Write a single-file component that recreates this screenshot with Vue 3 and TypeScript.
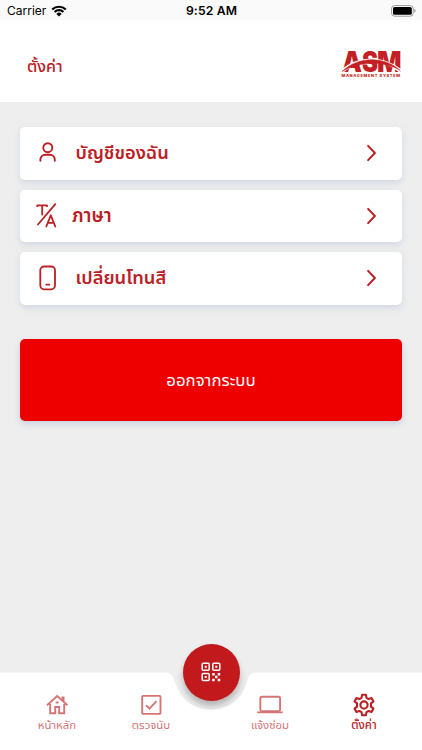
<script setup lang="ts">
interface Row { id: string; label: string }
interface Tab { id: string; label: string; active?: boolean }

const rows: Row[] = [
  { id: 'account', label: 'บัญชีของฉัน' },
  { id: 'language', label: 'ภาษา' },
  { id: 'theme', label: 'เปลี่ยนโทนสี' },
]
const leftTabs: Tab[] = [
  { id: 'home', label: 'หน้าหลัก' },
  { id: 'check', label: 'ตรวจนับ' },
]
const rightTabs: Tab[] = [
  { id: 'repair', label: 'แจ้งซ่อม' },
  { id: 'settings', label: 'ตั้งค่า', active: true },
]
</script>

<template>
  <div class="screen">
    <div class="status">
      <div class="carrier">
        <span>Carrier</span>
        <svg width="16" height="12" viewBox="0 0 16 12">
          <path d="M1.2 4.5a9.8 9.8 0 0 1 13.6 0M3.6 7a6.3 6.3 0 0 1 8.8 0" fill="none" stroke="#000" stroke-width="2.2" />
          <path d="M8 11.5L5.4 8.9a3.7 3.7 0 0 1 5.2 0z" />
        </svg>
      </div>
      <div class="clock">9:52 AM</div>
      <div class="battery">
        <svg width="26" height="12" viewBox="0 0 26 12">
          <rect x="1.6" y=".6" width="21.6" height="10.6" rx="3" fill="#fff" stroke="#999" stroke-width="1" />
          <rect x="3" y="2" width="18.8" height="7.8" rx="1.6" />
          <path d="M24.4 4c1.5.5 1.5 3.3 0 3.8z" fill="#888" />
        </svg>
      </div>
    </div>

    <header class="header">
      <h1 class="title">ตั้งค่า</h1>
      <svg class="logo" width="62" height="40" viewBox="0 -8 62 40">
        <g class="logo-main">
          <text x="2" y="20.600" textLength="20" lengthAdjust="spacingAndGlyphs">A</text>
          <text x="22" y="20.600" textLength="16" lengthAdjust="spacingAndGlyphs">S</text>
          <text x="37" y="20.600" textLength="24.500" lengthAdjust="spacingAndGlyphs">M</text>
        </g>
        <path d="M1.500 20.600C17 6.500 42 4.500 60.500 20" fill="none" stroke="#fff" stroke-width="3.600" />
        <path d="M2 20.600C16 6.500 42 3.500 60 19.200C42 9 19 10.500 2 20.600z" fill="#c41f24" stroke="#c41f24" stroke-width=".5" />
        <text class="logo-sub" x="1.500" y="25.800" textLength="58.500">MANAGEMENT SYSTEM</text>
      </svg>
    </header>

    <main class="content">
      <div v-for="row in rows" :key="row.id" class="card" :class="row.id">
        <svg v-if="row.id === 'account'" class="row-icon" width="24" height="28" viewBox="0 0 24 28">
          <g fill="none" stroke="#bb2025" stroke-width="1.9" stroke-linecap="round">
            <circle cx="11.800" cy="8.700" r="4.500" />
            <path d="M4.400 21.800v-1.300a4.900 4.900 0 0 1 4.900-4.800h4.600a4.900 4.900 0 0 1 4.900 4.800v1.300" />
          </g>
        </svg>
        <svg v-else-if="row.id === 'language'" class="row-icon" width="24" height="28" viewBox="0 0 24 28">
          <path d="M1.300 4.200V3.300H11V4.200M6.200 3.300v9.200M19.300 2.200L2 22.500M10.300 24.500L14.800 13.300L19.300 24.500M11.800 20.800h6" fill="none" stroke="#bb2025" stroke-width="1.800" stroke-linecap="round" stroke-linejoin="round" />
        </svg>
        <svg v-else class="row-icon" width="24" height="28" viewBox="0 0 24 28">
          <g fill="none" stroke="#bb2025" stroke-width="1.800" stroke-linecap="round">
            <rect x="4.300" y="2.500" width="14.700" height="22.800" rx="3.700" />
            <path d="M10.300 20.600h3" />
          </g>
        </svg>
        <span class="row-label">{{ row.label }}</span>
        <svg class="chevron" width="12" height="18" viewBox="0 0 12 18">
          <path d="M2.100 1.900L8.900 9L2.100 16.100" fill="none" stroke="#bb2025" stroke-width="2" stroke-linecap="round" stroke-linejoin="round" />
        </svg>
      </div>
      <button class="logout"><span>ออกจากระบบ</span></button>
    </main>

    <nav class="nav">
      <svg class="nav-bg" width="422" height="78" viewBox="0 0 422 78">
        <defs>
          <linearGradient id="notch" x1="0" y1="0" x2="0" y2="1">
            <stop offset="0" stop-color="#eee" />
            <stop offset=".45" stop-color="#ececec" />
            <stop offset="1" stop-color="#eee" />
          </linearGradient>
        </defs>
        <rect x="165" width="92" height="42" fill="url(#notch)" />
        <path d="M0 .500H165C172 .500 173.500 5 175 10C180 27 193 37.500 211 37.500S242 27 247 10C248.500 5 250 .500 257 .500H422V78H0Z" fill="#fff" />
      </svg>
      <div v-for="tab in leftTabs" :key="tab.id" class="tab" :class="tab.id">
        <svg v-if="tab.id === 'home'" width="24" height="22" viewBox="0 0 24 22">
          <g fill="none" stroke="#d57577" stroke-width="1.900">
            <path d="M2 11.200L12.200 2.100L22.400 11.200M5.200 10v9.200H10.200V13h4v6.200h5V10" />
            <path d="M18 7V2.500" stroke-width="3" />
            <path d="M10.700 8.500h2.800" stroke-width="2" />
          </g>
        </svg>
        <svg v-else width="24" height="22" viewBox="0 0 24 22">
          <rect x="3.200" y="1.900" width="18.300" height="18" rx="1" fill="none" stroke="#d57577" stroke-width="1.900" />
          <path d="M7 11.200l3.500 3.500l7-7.500" fill="none" stroke="#d57577" stroke-width="1.900" />
        </svg>
        <span>{{ tab.label }}</span>
      </div>
      <button class="scan" aria-label="QR">
        <svg width="20" height="20" viewBox="0 0 20 20">
          <g fill="none" stroke="#fff" stroke-width="1.500">
            <rect x="1.200" y="1.200" width="7" height="7" rx="1" />
            <rect x="11.800" y="1.200" width="7" height="7" rx="1" />
            <rect x="1.200" y="11.600" width="7" height="7" rx="1" />
          </g>
          <path fill="#fff" d="M3.700 3.700h2v2h-2zM14.300 3.700h2v2h-2zM3.700 14.100h2v2h-2zM11.200 11h2.500v2.500h-2.500zM16.700 11h2.500v2.500h-2.500zM14 13.800h2.500v2.500H14zM11.200 16.700h2.500v2.500h-2.500zM16.700 16.700h2.500v2.500h-2.500z" />
        </svg>
      </button>
      <div v-for="tab in rightTabs" :key="tab.id" class="tab" :class="[tab.id, { active: tab.active }]">
        <svg v-if="tab.id === 'repair'" width="28" height="22" viewBox="0 0 28 22">
          <rect x="4.300" y="2.800" width="19.800" height="14.400" rx="1.500" fill="none" stroke="#d57577" stroke-width="1.900" />
          <path d="M1 17.400h26v.6a1.300 1.300 0 0 1-1.300 1.300H2.300A1.300 1.300 0 0 1 1 18z" fill="#d57577" />
        </svg>
        <svg v-else width="24" height="24" viewBox="0 0 24 24">
          <g fill="none" stroke="#bb2025" stroke-width="2.100" stroke-linejoin="round">
            <circle cx="12" cy="12" r="3.600" />
            <path d="M10.100 1.800h3.800l.6 3.100l2 1.150l3-1l1.900 3.300l-2.400 2v3.300l2.400 2l-1.900 3.300l-3-1l-2 1.150l-.6 3.100h-3.800l-.6-3.100l-2-1.150l-3 1l-1.900-3.300l2.400-2v-3.300l-2.400-2l1.900-3.300l3 1l2-1.150z" />
          </g>
        </svg>
        <span>{{ tab.label }}</span>
      </div>
    </nav>
  </div>
</template>

<style>
body { margin: 0; }
</style>

<style scoped>
.screen {
  width: 422px;
  height: 750px;
  display: flex;
  flex-direction: column;
  background: #eee;
  overflow: hidden;
  color: #bb2025;
  font-family: "Noto Sans Thai", "Noto Sans", "Inter", sans-serif;
}
.status {
  height: 20px;
  display: grid;
  grid-template-columns: 1fr 1fr 1fr;
  align-items: center;
  padding: 1px 6px 0 7px;
  box-sizing: border-box;
  background: #fafafa;
  color: #000;
  font: 13px/20px "Inter", sans-serif;
}
.carrier { display: flex; align-items: center; gap: 4.500px; font-size: 12px; }
.carrier svg { margin-bottom: 1px; }
.clock { text-align: center; font-weight: 600; font-size: 12.200px; letter-spacing: .15px; }
.battery { display: flex; justify-content: flex-end; margin-bottom: 1px; }
.header {
  height: 82px;
  padding: 0 20px 0 27px;
  display: flex;
  align-items: center;
  justify-content: space-between;
  background: #fff;
}
.title { margin: 12px 0 0; font-size: 16px; font-weight: 500; line-height: 24px; }
.logo { margin-top: 4px; }
.logo-main { font: 900 28px "Inter", sans-serif; fill: #c41f24; }
.logo-sub { font: 800 4px "Inter", sans-serif; fill: #c41f24; }
.content { flex: 1; padding: 25px 20px 0; }
.card {
  height: 52.500px;
  margin-bottom: 10px;
  padding: 0 24px 0 16px;
  box-sizing: border-box;
  display: flex;
  align-items: center;
  background: #fff;
  border-radius: 5px;
  box-shadow: 0 3px 6px rgba(150, 165, 200, .3);
}
.row-label { flex: 1; margin: 1px 0 0 15.500px; font-size: 18.300px; font-weight: 600; line-height: 30px; white-space: nowrap; }
.language .row-label { margin-left: 12px; font-size: 18.600px; }
.logout {
  display: flex;
  align-items: center;
  justify-content: center;
  width: 382px;
  height: 82px;
  margin-top: 34.500px;
  padding: 2px 0 0;
  border: 0;
  border-radius: 5px;
  background: #ee0000;
  color: #fff;
  font: 400 16.800px/24px "Noto Sans Thai", "Noto Sans", sans-serif;
  box-shadow: 0 3px 6px rgba(150, 165, 200, .4);
}
.nav {
  position: relative;
  height: 78px;
  display: grid;
  grid-template-columns: 94px 94px 36px 72px 116px;
  padding-left: 10px;
  box-sizing: border-box;
}
.nav-bg { position: absolute; left: 0; top: 0; }
.tab {
  position: relative;
  display: flex;
  flex-direction: column;
  align-items: center;
  padding-top: 22px;
  color: #d57577;
  font-size: 11.400px;
  line-height: 20px;
  white-space: nowrap;
}
.tab svg { height: 22px; flex: none; }
.tab.settings svg { height: 24px; margin: -1px 0; }
.tab.active { color: #bb2025; font-weight: 500; }
.scan {
  position: absolute;
  left: 182.500px;
  top: -28.500px;
  width: 57px;
  height: 57px;
  padding: 0;
  border: 0;
  border-radius: 50%;
  display: flex;
  align-items: center;
  justify-content: center;
  background: #c1191c;
  box-shadow: 0 5px 6px rgba(0, 0, 0, .24);
}
.repair { grid-column: 4; }
.settings { grid-column: 5; }
</style>
